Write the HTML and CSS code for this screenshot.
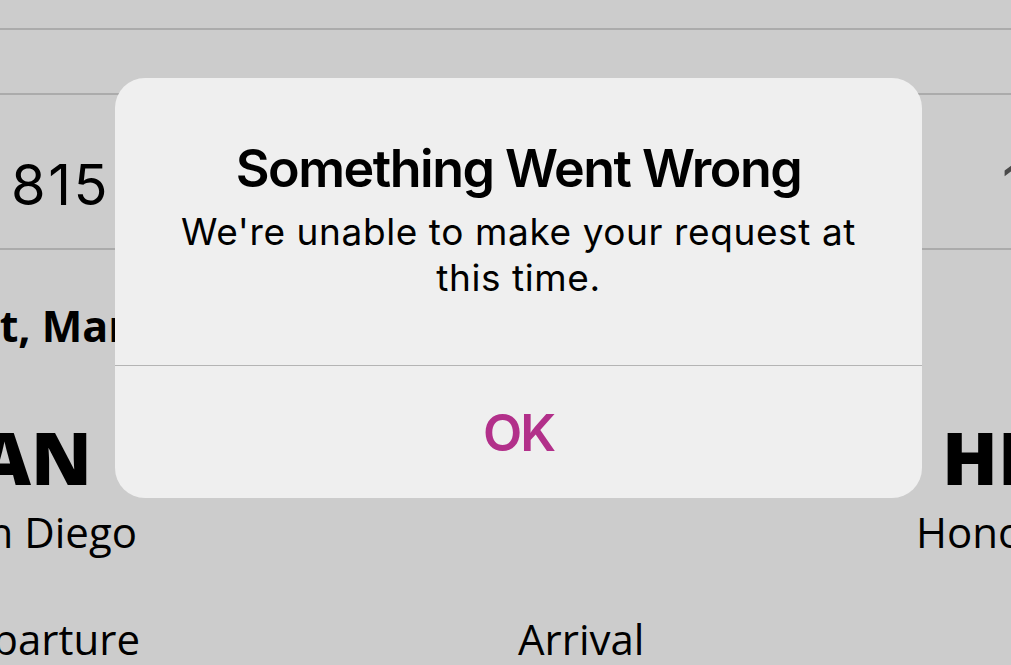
FILE: index.html
```html
<!DOCTYPE html>
<html lang="en">
<head>
<meta charset="utf-8">
<title>Something Went Wrong</title>
<link rel="stylesheet" href="styles.css">
</head>
<body>
<div class="screen">
  <div class="bar bar-top"></div>
  <div class="bar bar-nav"></div>
  <div class="bar flight">
    <div class="flight-no">815</div>
    <div class="flight-side">10:55</div>
  </div>
  <div class="date">Sat, Mar 12</div>
  <div class="pair codes">
    <div class="left"><span>SAN</span></div>
    <div class="right">HNL</div>
  </div>
  <div class="pair cities">
    <div class="left"><span>San Diego</span></div>
    <div class="right">Honolulu</div>
  </div>
  <div class="pair labels">
    <div class="left"><span>Departure</span></div>
    <div class="right">Arrival</div>
  </div>

  <div class="alert" role="alertdialog">
    <div class="alert-body">
      <h1 class="alert-title">Something Went Wrong</h1>
      <p class="alert-msg">We're unable to make your request at this time.</p>
    </div>
    <div class="alert-actions">
      <button class="alert-btn">OK</button>
    </div>
  </div>
</div>
</body>
</html>
```

FILE: styles.css
```css
* { box-sizing: border-box; }
html, body {
  margin: 0;
  padding: 0;
  background: #cccccc;
}
body {
  width: 1011px;
  height: 665px;
  overflow: hidden;
  font-family: "Open Sans", "Noto Sans", sans-serif;
  color: #000;
}
.screen {
  position: relative;
  width: 1011px;
  height: 665px;
  overflow: hidden;
}
.bar {
  border-bottom: 2px solid #ababab;
}
.bar-top { height: 30px; }
.bar-nav { height: 65px; }
.flight {
  height: 155px;
  display: grid;
  grid-template-columns: 1002px auto;
  padding-top: 62px;
  font-family: Inter, "Liberation Sans", sans-serif;
  font-size: 56px;
  line-height: 1;
  white-space: nowrap;
}
.flight-no {
  padding-left: 11px;
  letter-spacing: 2.5px;
}
.flight-side { color: #4a4a4a; }

.date {
  margin-top: 51px;
  margin-left: -50px;
  font-weight: 700;
  font-size: 43px;
  line-height: 50px;
  white-space: nowrap;
}

.pair {
  display: grid;
  white-space: nowrap;
}
.pair .left {
  display: flex;
  justify-content: flex-end;
}
.codes {
  grid-template-columns: 92px auto;
  column-gap: 850px;
  margin-top: 69px;
  font-size: 73px;
  font-weight: 800;
  line-height: 73px;
}
.cities {
  grid-template-columns: 137px auto;
  column-gap: 779px;
  margin-top: 14px;
  font-size: 42px;
  line-height: 50px;
}
.labels {
  grid-template-columns: 140px auto;
  column-gap: 378px;
  margin-top: 57px;
  font-size: 42px;
  line-height: 50px;
}

/* Alert dialog overlay */
.alert {
  position: absolute;
  left: 115px;
  top: 78px;
  width: 807px;
  height: 420px;
  background: #efefef;
  border-radius: 30px;
  display: flex;
  flex-direction: column;
  font-family: Inter, "Liberation Sans", sans-serif;
  text-align: center;
  overflow: hidden;
}
.alert-body {
  padding: 61px 56px 0;
  height: 288px;
  border-bottom: 1px solid #b4b4b4;
}
.alert-title {
  margin: 0;
  font-size: 52px;
  font-weight: 600;
  line-height: 60px;
  letter-spacing: -1.5px;
  color: #000;
}
.alert-msg {
  margin: 10px 0 0;
  font-size: 37px;
  font-weight: 400;
  line-height: 46px;
  letter-spacing: 0.6px;
  color: #000;
}
.alert-actions {
  flex: 1;
  display: flex;
}
.alert-btn {
  flex: 1;
  border: 0;
  background: transparent;
  font-family: Inter, "Liberation Sans", sans-serif;
  font-size: 51px;
  font-weight: 600;
  letter-spacing: -2px;
  color: #b2308a;
  padding: 0;
}
```
